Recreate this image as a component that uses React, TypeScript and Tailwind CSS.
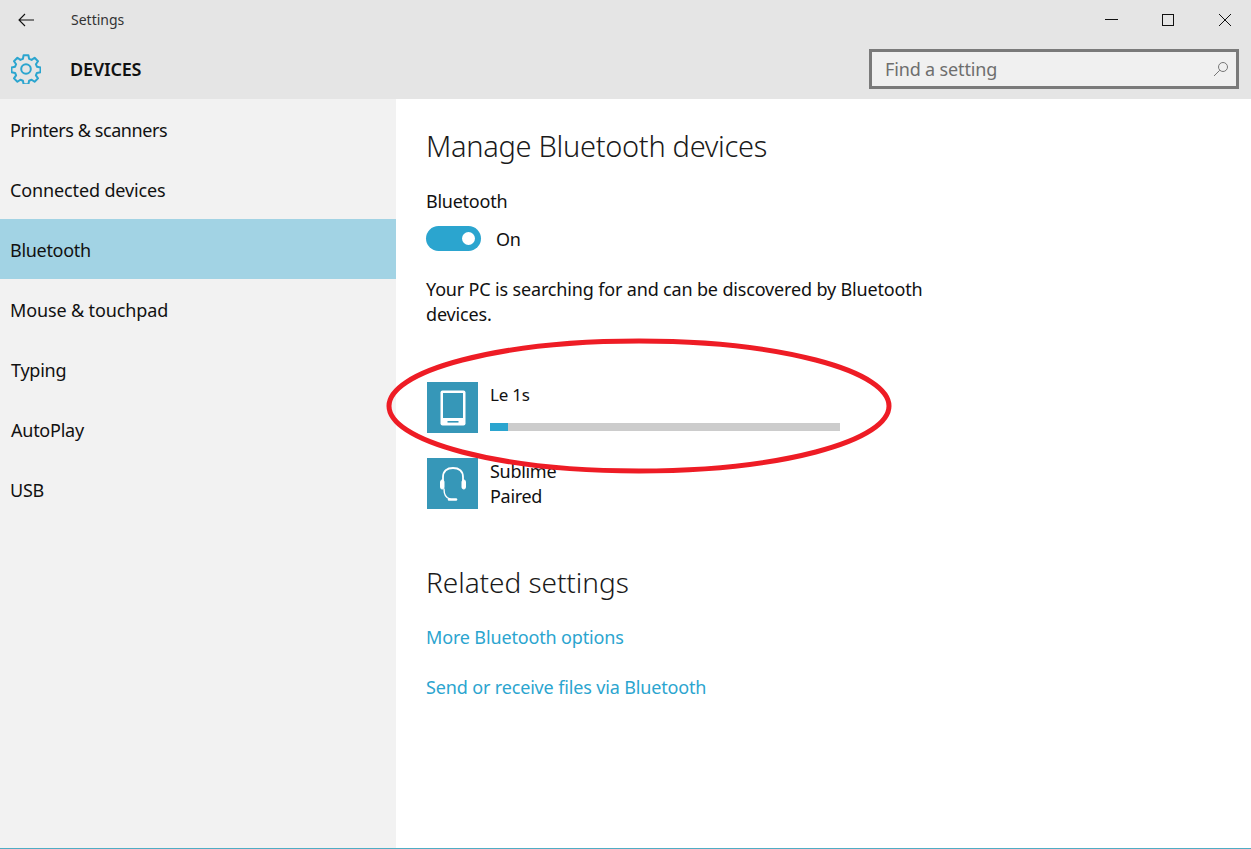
import React from "react";

const font = { fontFamily: '"Noto Sans", sans-serif' };

const navItems = [
  { label: "Printers & scanners", cls: "pl-[10px] tracking-[-0.42px]" },
  { label: "Connected devices", cls: "pl-[10px] tracking-[-0.13px]" },
  { label: "Bluetooth", cls: "pl-[10px] tracking-[-0.3px] bg-[#a2d3e4]" },
  { label: "Mouse & touchpad", cls: "pl-[10px] tracking-[-0.13px]" },
  { label: "Typing", cls: "pl-[11px] tracking-[-0.25px]" },
  { label: "AutoPlay", cls: "pl-[11px] tracking-[-0.25px]" },
  { label: "USB", cls: "pl-[10px] tracking-[-0.25px]" },
];

function Gear() {
  return (
    <svg width="30" height="30" viewBox="0 0 30 30" fill="none" stroke="#2ba5cf" strokeWidth="2" strokeLinejoin="round">
      <path d="M12.6 1.300h4.800l.7 3.600 2.500 1 3-2.100 3.400 3.400-2.100 3 1 2.500 3.600.7v4.800l-3.600.7-1 2.500 2.100 3-3.400 3.400-3-2.100-2.500 1-.7 3.600h-4.800l-.7-3.600-2.500-1-3 2.100-3.400-3.400 2.100-3-1-2.500-3.600-.7v-4.800l3.600-.7 1-2.500-2.100-3 3.400-3.400 3 2.100 2.500-1z" />
      <circle cx="15" cy="15" r="4.800" />
    </svg>
  );
}

function DeviceIcon({ children }: { children: React.ReactNode }) {
  return <div className="w-[51px] h-[51px] bg-[#3697b8] shrink-0 flex items-center justify-center">{children}</div>;
}

export default function App() {
  return (
    <div className="relative w-[1251px] h-[849px] overflow-hidden bg-white text-[#111]" style={font}>
      <header className="h-[99px] bg-[#e5e5e5] flex flex-col">
        <div className="h-[39px] flex items-center">
          <div className="w-[71px] pl-[18px] flex items-center">
            <svg width="16" height="14" viewBox="0 0 16 14" fill="none" stroke="#111" strokeWidth="1.100">
              <path d="M16 7H1M7 1 1 7l6 6" />
            </svg>
          </div>
          <span className="text-[14px] text-[#333]">Settings</span>
          <div className="ml-auto flex items-center">
            <svg className="mr-[44px]" width="13" height="13" viewBox="0 0 13 13" stroke="#111" strokeWidth="1"><path d="M0 6.500h13" /></svg>
            <svg className="mr-[45px]" width="12" height="12" viewBox="0 0 12 12" fill="none" stroke="#111" strokeWidth="1"><rect x=".5" y=".5" width="11" height="11" /></svg>
            <svg className="mr-[20px]" width="12" height="12" viewBox="0 0 12 12" stroke="#111" strokeWidth="1"><path d="M0 0l12 12M12 0 0 12" /></svg>
          </div>
        </div>
        <div className="flex-1 flex items-start">
          <div className="w-[70px] pl-[11px] pt-[15px] shrink-0"><Gear /></div>
          <span className="pt-[19px] text-[18px] leading-[23px] font-semibold tracking-[-0.2px] text-[#111]">DEVICES</span>
          <div className="ml-auto mr-[12px] mt-[10px] w-[370px] h-[40px] border-[3px] border-[#7a7a7a] bg-[#f0f0f0] flex items-center pl-[13px] pr-[7px]">
            <span className="text-[18px] tracking-[-0.15px] text-[#6e6e6e]">Find a setting</span>
            <svg className="ml-auto" width="16" height="16" viewBox="0 0 16 16" fill="none" stroke="#777" strokeWidth="1"><circle cx="10" cy="6" r="4.500" /><path d="M6.800 9.200 1 15" /></svg>
          </div>
        </div>
      </header>

      <div className="flex h-[749px]">
        <nav className="w-[396px] shrink-0 bg-[#f2f2f2]">
          {navItems.map((n) => (
            <div key={n.label} className={`h-[60px] flex items-center pt-[2px] text-[18px] ${n.cls}`}>
              {n.label}
            </div>
          ))}
        </nav>

        <main className="flex-1 pl-[30px] flex flex-col items-start">
          <h1 className="mt-[25px] text-[29px] leading-[44px] font-light tracking-[-0.3px] text-[#1a1a1a]">Manage Bluetooth devices</h1>
          <div className="mt-[20px] text-[18px] leading-[26px] tracking-[-0.25px]">Bluetooth</div>
          <div className="mt-[11px] flex items-center h-[26px]">
            <div className="w-[55px] h-[25px] rounded-full bg-[#2ba5cf] flex items-center justify-end pr-[6px]">
              <div className="w-[13px] h-[13px] rounded-full bg-white" />
            </div>
            <span className="ml-[15px] pt-[2px] text-[18px] tracking-[-0.25px]">On</span>
          </div>
          <p className="mt-[26px] w-[510px] text-[18px] leading-[25px] tracking-[-0.16px]">
            Your PC is searching for and can be discovered by Bluetooth devices.
          </p>
          <div className="mt-[55px] ml-px flex">
            <DeviceIcon>
              <svg width="28" height="38" viewBox="0 0 28 38" fill="none">
                <rect x="1.500" y="1.500" width="25" height="35" rx="2" fill="white" />
                <rect x="4" y="4" width="20" height="25" fill="#3697b8" />
                <rect x="8.500" y="32" width="11" height="1.600" fill="#3697b8" />
              </svg>
            </DeviceIcon>
            <div className="ml-[12px] w-[350px] pt-[1px]">
              <div className="text-[17px] leading-[24px] tracking-[-0.25px]">Le 1s</div>
              <div className="mt-[16px] h-[8px] bg-[#cccccc]"><div className="h-full w-[18px] bg-[#2ba5cf]" /></div>
            </div>
          </div>
          <div className="mt-[25px] ml-px flex">
            <DeviceIcon>
              <svg width="28" height="36" viewBox="0 0 28 36" fill="none" stroke="white" strokeLinecap="round">
                <path d="M4 20V11C4 5 8 2 14 2s10 3 10 9v9" strokeWidth="1.800" />
                <rect x="1.500" y="14" width="3.500" height="9" rx="1.700" fill="white" strokeWidth="1" />
                <rect x="23" y="14" width="3.500" height="9" rx="1.700" fill="white" strokeWidth="1" />
                <path d="M5 23c0 6 2 9 6 10" strokeWidth="1.400" />
                <path d="M10 33.500h7" strokeWidth="2.500" />
              </svg>
            </DeviceIcon>
            <div className="ml-[12px] pt-px text-[18px] leading-[25px] tracking-[-0.3px]">
              <div>Sublime</div>
              <div>Paired</div>
            </div>
          </div>
          <h2 className="mt-[53px] text-[28px] leading-[40px] font-light tracking-[-0.05px] text-[#1a1a1a]">Related settings</h2>
          <a className="mt-[22px] text-[18px] leading-[26px] tracking-[-0.15px] text-[#2ba5cf]">More Bluetooth options</a>
          <a className="mt-[24px] text-[18px] leading-[26px] tracking-[-0.15px] text-[#2ba5cf]">Send or receive files via Bluetooth</a>
        </main>
      </div>
      <div className="h-[1px] bg-[#4fadc4]" />

      <svg className="absolute left-[386px] top-[338px] pointer-events-none" width="506" height="136" viewBox="0 0 506 136" fill="none">
        <ellipse cx="253" cy="68" rx="250" ry="65" stroke="#ee1c25" strokeWidth="5" />
      </svg>
    </div>
  );
}
